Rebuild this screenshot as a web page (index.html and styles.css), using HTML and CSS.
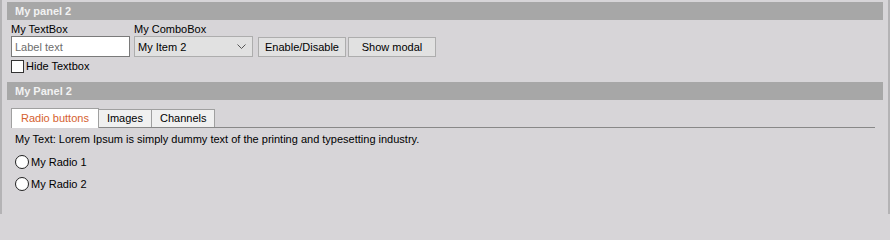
FILE: index.html
```html
<!DOCTYPE html>
<html>
<head>
<meta charset="utf-8">
<link rel="stylesheet" href="styles.css">
</head>
<body>
<div class="window">
  <section class="panel">
    <div class="panel-header">My panel 2</div>
    <div class="panel-body row-body">
      <div class="field">
        <label class="field-label">My TextBox</label>
        <input class="textbox" type="text" placeholder="Label text">
        <label class="check"><span class="checkbox"></span>Hide Textbox</label>
      </div>
      <div class="field">
        <label class="field-label">My ComboBox</label>
        <div class="combo"><span>My Item 2</span>
          <svg class="chev" width="9" height="6" viewBox="0 0 9 6"><path d="M0.5 0.5 L4.5 4.5 L8.5 0.5" fill="none" stroke="#555" stroke-width="1"/></svg>
        </div>
      </div>
      <div class="buttons">
        <button class="btn">Enable/Disable</button>
        <button class="btn">Show modal</button>
      </div>
    </div>
  </section>
  <section class="panel panel2">
    <div class="panel-header">My Panel 2</div>
    <div class="panel-body tabs-body">
      <div class="tabs">
        <div class="tab active">Radio buttons</div>
        <div class="tab">Images</div>
        <div class="tab">Channels</div>
      </div>
      <div class="tab-content">
        <p class="text">My Text: Lorem Ipsum is simply dummy text of the printing and typesetting industry.</p>
        <label class="radio"><span class="radio-circle"></span>My Radio 1</label>
        <label class="radio"><span class="radio-circle"></span>My Radio 2</label>
      </div>
    </div>
  </section>
</div>
</body>
</html>
```

FILE: styles.css
```css
html, body {
  margin: 0;
  padding: 0;
  background: #d7d5d8;
}
body {
  font-family: "Liberation Sans", Arial, sans-serif;
  font-size: 11px;
  color: #000;
  width: 890px;
  height: 214px;
  overflow: hidden;
}
.window {
  box-sizing: border-box;
  height: 214px;
  border-left: 2px solid #b4b3b5;
  border-right: 2px solid #b4b3b5;
  padding: 2px 5px 0 5px;
}
.panel-header {
  height: 18px;
  line-height: 18px;
  background: #a7a7a7;
  color: #f2f2f2;
  font-weight: bold;
  padding-left: 8px;
}
.row-body {
  display: flex;
  align-items: flex-start;
  padding: 3px 0 0 4px;
  height: 59px;
}
.field {
  display: flex;
  flex-direction: column;
  margin-right: 4px;
}
.field-label {
  height: 13px;
  line-height: 13px;
  font-size: 11px;
}
.textbox {
  box-sizing: border-box;
  width: 119px;
  height: 21px;
  margin: 0;
  border: 1px solid #7a7a7a;
  background: #fff;
  font-family: inherit;
  font-size: 11px;
  padding: 0 3px;
  outline: none;
}
.textbox::placeholder {
  color: #6d6d6d;
}
.check {
  display: flex;
  align-items: center;
  margin-top: 2px;
  height: 14px;
}
.checkbox {
  box-sizing: border-box;
  width: 13px;
  height: 13px;
  border: 1px solid #333;
  background: #fff;
  margin-right: 2px;
}
.combo {
  box-sizing: border-box;
  width: 119px;
  height: 21px;
  border: 1px solid #adadad;
  background: #e1e1e1;
  display: flex;
  align-items: center;
  justify-content: space-between;
  padding: 0 6px 0 3px;
}
.buttons {
  display: flex;
  gap: 2px;
  margin-top: 14px;
  margin-left: 1px;
}
.btn {
  box-sizing: border-box;
  height: 20px;
  width: 88px;
  margin: 0;
  border: 1px solid #adadad;
  background: #e1e1e1;
  font-family: inherit;
  font-size: 11px;
  color: #000;
  padding: 0;
}
.tabs-body {
  padding: 8px 4px 0 4px;
}
.tabs {
  display: flex;
  align-items: flex-end;
  border-bottom: 1px solid #888;
  margin-right: 4px;
  height: 19px;
}
.tab {
  box-sizing: border-box;
  height: 18px;
  line-height: 17px;
  padding: 0 8px;
  border: 1px solid #a0a0a0;
  border-bottom: none;
  border-left: none;
  background: #f0f0f0;
}
.tab.active {
  height: 20px;
  line-height: 19px;
  background: #fff;
  color: #d5612f;
  border-left: 1px solid #a0a0a0;
  margin-bottom: -1px;
  padding: 0 9px;
}
.tab-content {
  padding: 5px 0 0 4px;
}
.text {
  margin: 0 0 5px 0;
  height: 13px;
  line-height: 13px;
}
.radio {
  display: flex;
  align-items: center;
  height: 22px;
}
.radio-circle {
  box-sizing: border-box;
  width: 14px;
  height: 14px;
  border: 1px solid #222;
  border-radius: 50%;
  background: #fff;
  margin-right: 2px;
}
```
